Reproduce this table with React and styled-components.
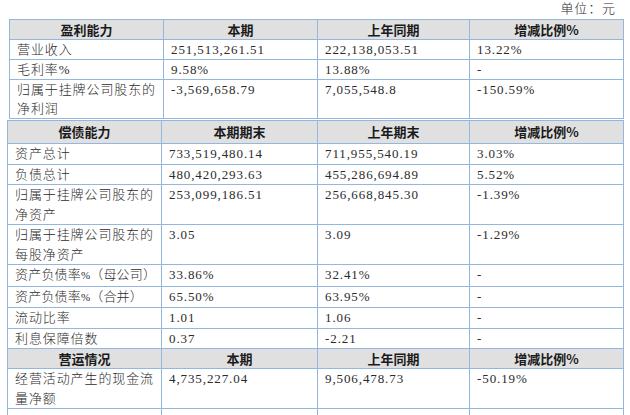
import React from "react";
import styled, { createGlobalStyle } from "styled-components";

const GlobalStyle = createGlobalStyle`
  html, body {
    margin: 0;
    padding: 0;
    background: #ffffff;
    overflow: hidden;
  }
`;

const Page = styled.div`
  width: 630px;
  font-family: "Liberation Serif", "Noto Sans CJK SC", serif;
  color: #2b2b2b;
`;

const UnitLine = styled.div`
  height: 19px;
  line-height: 18px;
  text-align: right;
  padding-right: 14px;
  font-size: 13px;
  font-weight: 300;
  letter-spacing: 0.9px;
`;

const Table = styled.table`
  border-collapse: collapse;
  table-layout: fixed;
  margin-left: ${(p) => p.$left}px;
  margin-top: ${(p) => p.$top || 0}px;
  width: ${(p) => p.$width}px;
`;

const Col = styled.col`
  width: ${(p) => p.$w}px;
`;

const HeadCell = styled.th`
  background: #e0e0e0;
  border: 1px solid #93b7df;
  padding: 0;
  height: ${(p) => p.$h}px;
  line-height: ${(p) => p.$h}px;
  font-family: "Noto Sans CJK SC", "Liberation Sans", sans-serif;
  font-weight: 700;
  font-size: 13px;
  color: #1a1a1a;
  text-align: center;
  vertical-align: middle;
`;

const Cell = styled.td`
  border: 1px solid #93b7df;
  padding: 0 2px 0 7px;
  font-size: 13px;
  font-weight: 300;
  letter-spacing: ${(p) => (p.$tight ? 0.2 : 0.9)}px;
  line-height: ${(p) => p.$lh}px;
  vertical-align: top;
  text-align: left;
  word-break: break-all;
  color: #2b2b2b;
`;

const Pct = styled.span`
  font-size: 11px;
  letter-spacing: 0;
`;

const table1 = {
  head: ["盈利能力", "本期", "上年同期", "增减比例%"],
  rows: [
    ["营业收入", "251,513,261.51", "222,138,053.51", "13.22%"],
    ["毛利率%", "9.58%", "13.88%", "-"],
    ["归属于挂牌公司股东的净利润", "-3,569,658.79", "7,055,548.8", "-150.59%"],
  ],
};

const table2 = [
  { head: ["偿债能力", "本期期末", "上年期末", "增减比例%"], h: 22 },
  { row: ["资产总计", "733,519,480.14", "711,955,540.19", "3.03%"] },
  { row: ["负债总计", "480,420,293.63", "455,286,694.89", "5.52%"] },
  { row: ["归属于挂牌公司股东的净资产", "253,099,186.51", "256,668,845.30", "-1.39%"] },
  { row: ["归属于挂牌公司股东的每股净资产", "3.05", "3.09", "-1.29%"] },
  { row: [["资产负债率", "（母公司）"], "33.86%", "32.41%", "-"] },
  { row: [["资产负债率", "（合并）"], "65.50%", "63.95%", "-"] },
  { row: ["流动比率", "1.01", "1.06", "-"] },
  { row: ["利息保障倍数", "0.37", "-2.21", "-"] },
  { head: ["营运情况", "本期", "上年同期", "增减比例%"], h: 19 },
  { row: ["经营活动产生的现金流量净额", "4,735,227.04", "9,506,478.73", "-50.19%"] },
  { row: ["\u00a0", "", "", ""] },
];

function renderCell(c, ci, lh) {
  if (Array.isArray(c)) {
    return (
      <Cell key={ci} $lh={lh} $tight>
        {c[0]}
        <Pct>%</Pct>
        {c[1]}
      </Cell>
    );
  }
  return (
    <Cell key={ci} $lh={lh}>
      {c}
    </Cell>
  );
}

export default function App() {
  return (
    <Page lang="zh-CN">
      <GlobalStyle />
      <UnitLine>单位：元</UnitLine>

      <Table $left={9} $width={614}>
        <colgroup>
          <Col $w={154} />
          <Col $w={154} />
          <Col $w={152} />
          <Col $w={154} />
        </colgroup>
        <tbody>
          <tr>
            {table1.head.map((h, i) => (
              <HeadCell key={i} $h={19}>
                {h}
              </HeadCell>
            ))}
          </tr>
          {table1.rows.map((r, ri) => (
            <tr key={ri}>{r.map((c, ci) => renderCell(c, ci, 19))}</tr>
          ))}
        </tbody>
      </Table>

      <Table $left={7} $top={1} $width={616}>
        <colgroup>
          <Col $w={154} />
          <Col $w={156} />
          <Col $w={152} />
          <Col $w={154} />
        </colgroup>
        <tbody>
          {table2.map((item, ri) =>
            item.head ? (
              <tr key={ri}>
                {item.head.map((h, i) => (
                  <HeadCell key={i} $h={item.h}>
                    {h}
                  </HeadCell>
                ))}
              </tr>
            ) : (
              <tr key={ri}>{item.row.map((c, ci) => renderCell(c, ci, 19.5))}</tr>
            )
          )}
        </tbody>
      </Table>
    </Page>
  );
}
